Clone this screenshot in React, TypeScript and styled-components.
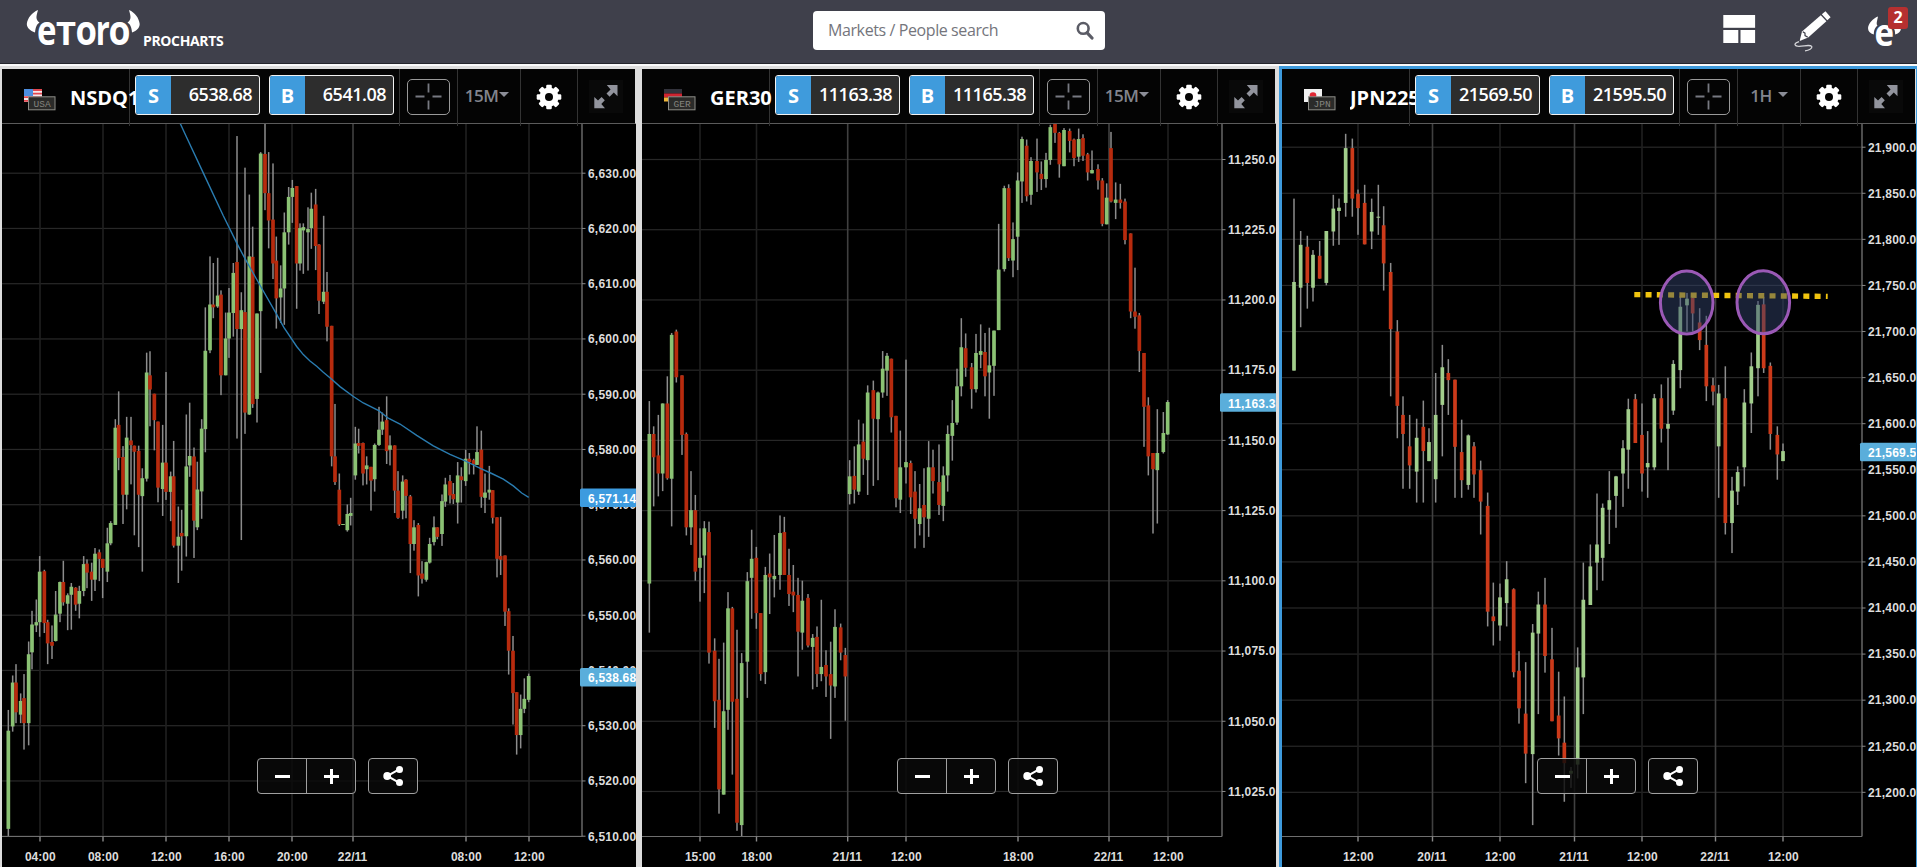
import React from 'react';
import styled, { createGlobalStyle } from 'styled-components';

const GlobalStyle = createGlobalStyle`
  * {
    box-sizing: border-box;
  }

  body {
    margin: 0;
    overflow: hidden;
    background: #dddddd;
    font-family: 'Open Sans', 'Noto Sans', sans-serif;
  }
`;

const Page = styled.div`
  display: flex;
  flex-direction: column;
  width: 1917px;
  height: 867px;
  overflow: hidden;
`;

const Header = styled.header`
  display: grid;
  grid-template-columns: 813px 292px 1fr;
  height: 64px;
  flex: none;
  background: #3f404b;
  border-bottom: 1px solid #24252c;
`;

const Brand = styled.div`
  display: flex;
  align-items: flex-start;
  padding-left: 25px;
`;

const BrandSub = styled.span`
  margin: 31px 0 0 1px;
  color: #fff;
  font-size: 14px;
  font-weight: 700;
  line-height: 20px;
  letter-spacing: -0.36px;
`;

const Search = styled.label`
  display: flex;
  align-items: center;
  justify-content: space-between;
  height: 39px;
  margin-top: 11px;
  padding: 0 11px 0 15px;
  border-radius: 4px;
  background: #fff;
`;

const SearchText = styled.span`
  color: #74757c;
  font-size: 16px;
  line-height: 22px;
  letter-spacing: -0.4px;
  margin-top: -2px;
`;

const HeaderActions = styled.div`
  display: flex;
  justify-content: flex-end;
  align-items: flex-start;
  padding-right: 9px;
`;

const NotifyButton = styled.div`
  position: relative;
  width: 41px;
  height: 56px;
`;

const Badge = styled.span`
  position: absolute;
  top: 7px;
  right: 0;
  width: 20px;
  height: 22px;
  border-radius: 3px;
  background: #b53030;
  color: #fff;
  font-size: 16px;
  font-weight: 700;
  line-height: 21px;
  text-align: center;
`;

const Workspace = styled.main`
  display: flex;
  flex: 1;
  border-top: 2px solid #fafafa;
  padding-left: 2px;
`;

const Panel = styled.section<{ $active?: boolean }>`
  display: flex;
  flex-direction: column;
  flex: none;
  width: ${({ $active }) => ($active ? 638 : 634)}px;
  margin-right: ${({ $active }) => ($active ? 0 : 6)}px;
  border: 0 solid ${({ $active }) => ($active ? '#3d9adc' : '#dddddd')};
  border-width: ${({ $active }) => ($active ? '3px 1px 0 3px' : '3px 0 0 0')};

  &:nth-child(2) {
    margin-right: 3px;
  }
`;

const Toolbar = styled.div`
  position: relative;
  z-index: 1;
  display: flex;
  flex: none;
  height: 55px;
  background: #040404;
  border-right: 1px solid #dddddd;
  border-bottom: 1px solid #5b5b5b;
`;

const Cell = styled.div<{ $width: number }>`
  display: flex;
  align-items: center;
  justify-content: center;
  flex: none;
  width: ${({ $width }) => $width}px;
  height: 57px;
  border-right: 1px solid #333;

  &:last-child {
    border-right: 0;
  }
`;

const TitleCell = styled(Cell)`
  justify-content: flex-start;
  padding-left: 22px;
`;

const Title = styled.span`
  flex: none;
  width: 66px;
  margin: 1px -10px 0 13px;
  overflow: hidden;
  color: #fff;
  font-size: 20px;
  font-weight: 700;
  line-height: 28px;
  white-space: nowrap;
`;

const TradeCell = styled(Cell)`
  position: relative;
  gap: 9px;
  padding: 0 0 5px 0;
`;

const TradeButton = styled.button`
  display: flex;
  width: 125px;
  height: 40px;
  padding: 0;
  overflow: hidden;
  border: 1px solid #f2f2f2;
  border-radius: 3px;
  background: #2d2d2d;
  color: #fff;
  font-family: inherit;
`;

const TradeSide = styled.span`
  width: 35px;
  height: 100%;
  background: #3f9bdc;
  font-size: 20px;
  font-weight: 700;
  line-height: 39px;
  text-align: center;
`;

const TradePrice = styled.span`
  flex: 1;
  padding-right: 7px;
  font-size: 18px;
  font-weight: 600;
  line-height: 37px;
  letter-spacing: -0.5px;
  text-align: right;
`;

const CrossButton = styled.button`
  display: flex;
  align-items: center;
  justify-content: center;
  width: 43px;
  height: 36px;
  margin-bottom: 2px;
  padding: 0;
  border: 1px solid #999;
  border-radius: 5px;
  background: transparent;
`;

const Timeframe = styled.div<{ $gap: number }>`
  display: flex;
  align-items: center;
  gap: ${({ $gap }) => $gap}px;
  margin-bottom: 3px;
  padding-right: ${({ $gap }) => ($gap > 2 ? 0 : 4)}px;
  color: #82848d;
  font-size: 17px;
  font-weight: 600;
  line-height: 24px;
  letter-spacing: -0.5px;
`;

const Caret = styled.i`
  margin-top: -4px;
  border: 5px solid transparent;
  border-top-color: #8b8d97;
  border-bottom: 0;
`;

const ChartArea = styled.div`
  position: relative;
  flex: 1;
  overflow: hidden;
  background: #000;
`;

const ChartSvg = styled.svg`
  display: block;
  font-family: 'Liberation Sans', Arial, sans-serif;
  font-size: 12px;
  font-weight: 700;
`;

const PriceLabel = styled.text`
  fill: #dcdcdc;
  letter-spacing: 0.2px;
`;

const TimeLabel = styled.text`
  fill: #dcdcdc;
  text-anchor: middle;
`;

const Controls = styled.div`
  position: absolute;
  top: 634px;
  left: 255px;
  display: flex;
  gap: 12px;
`;

const ButtonGroup = styled.div`
  display: flex;
  border: 1px solid #a0a0a0;
  border-radius: 4px;
  background: rgba(10, 10, 10, 0.82);
`;

const ControlButton = styled.button`
  display: flex;
  align-items: center;
  justify-content: center;
  width: 48px;
  height: 34px;
  padding: 0;
  border: 0;
  background: transparent;

  & + & {
    width: 49px;
    border-left: 1px solid #a0a0a0;
  }
`;

const LogoLetter = styled.text`
  fill: #fff;
  font-family: 'Open Sans', sans-serif;
  font-weight: 700;
`;

const Logo = () => (
  <svg width="117" height="56" viewBox="25 0 117 56">
    <path d="M38 10 C36 17 35.5 19.5 39.5 22.5 C37 24 35.5 27 35 32.5 C30 30.5 27 28 26.8 24 C27.5 18 32 12.5 38 10Z" fill="#fff" />
    <path d="M129 10 C131 17 131.5 19.5 127.5 22.5 C130 24 131.5 27 132 32.5 C137 30.5 139.5 28 139.7 24 C139 18 135 12.5 129 10Z" fill="#fff" />
    <LogoLetter x="37" y="45.3" fontSize="42" textLength="19.5" lengthAdjust="spacingAndGlyphs">e</LogoLetter>
    <LogoLetter x="56" y="45.3" fontSize="31.5" textLength="20" lengthAdjust="spacingAndGlyphs">T</LogoLetter>
    <LogoLetter x="75.5" y="45.3" fontSize="42" textLength="21.5" lengthAdjust="spacingAndGlyphs">o</LogoLetter>
    <LogoLetter x="95.7" y="45.3" fontSize="42" textLength="14" lengthAdjust="spacingAndGlyphs">r</LogoLetter>
    <LogoLetter x="108.5" y="45.3" fontSize="42" textLength="22" lengthAdjust="spacingAndGlyphs">o</LogoLetter>
  </svg>
);

const SearchIcon = () => (
  <svg width="18" height="19" viewBox="0 0 18 19" fill="none" stroke="#5b5c66">
    <circle cx="7.2" cy="7.4" r="5.4" strokeWidth="2.6" />
    <path d="M11.2 11.8 L16 17" strokeWidth="3.2" strokeLinecap="round" />
  </svg>
);

const LayoutIcon = () => (
  <svg width="71" height="56" viewBox="1723 0 71 56" fill="#fff">
    <rect x="1723.3" y="15" width="31.8" height="12.8" />
    <rect x="1723.3" y="30" width="15" height="13" />
    <rect x="1740.5" y="30" width="14.6" height="13" />
  </svg>
);

const PencilIcon = () => (
  <svg width="73" height="56" viewBox="1794 0 73 56">
    <path d="M1825.5 11.3 L1830.6 17.3 L1827.3 20.2 L1821.8 14.2Z" fill="#fff" />
    <path d="M1820.8 15.2 L1826.4 21.2 L1808.2 37.6 L1799.6 41 L1802 31.6Z" fill="#fff" />
    <path d="M1802.8 31.8 L1805 33.2 L1805 35.6 L1807.8 37.2" fill="none" stroke="#3f404b" strokeWidth="1.2" />
    <path
      d="M1799 41.6 C1794.5 43 1793.5 45 1797.5 46.2 C1802 47 1810 43.8 1811.8 46.5 C1812.5 48.5 1809 50.5 1805 50.8"
      fill="none"
      stroke="#d5d5d9"
      strokeWidth="1.3"
    />
  </svg>
);

const EtoroIcon = () => (
  <svg width="41" height="56" viewBox="1867 0 41 56">
    <path d="M1878 16.5 C1877 21.5 1876 24 1877.5 25.5 C1874.5 28 1874 30.5 1873.8 34.5 C1870 33.5 1868 31 1868 28 C1868.5 23 1873 18.5 1878 16.5Z" fill="#fff" />
    <path d="M1891 16.5 C1892 21.5 1893 24 1891.5 25.5 C1894.5 28 1895 30.5 1895.2 34.5 C1899 33.5 1901 31 1901 28 C1900.5 23 1896 18.5 1891 16.5Z" fill="#fff" />
    <LogoLetter x="1874.5" y="46" fontSize="38" textLength="19.5" lengthAdjust="spacingAndGlyphs">e</LogoLetter>
  </svg>
);

const CrossIcon = () => (
  <svg width="27" height="27" viewBox="0 0 27 27" stroke="#777981" strokeWidth="1.8">
    <path d="M0.5 13.5H9.5M17.5 13.5H26.5M13.5 0.5V9.5M13.5 17.5V26.5" />
  </svg>
);

const GearIcon = () => (
  <svg width="26" height="28" viewBox="-13 -13 26 28">
    {[0, 45, 90, 135].map((angle) => (
      <rect key={angle} x="-2.8" y="-12.3" width="5.6" height="24.6" rx="1.2" fill="#fff" transform={`rotate(${angle})`} />
    ))}
    <circle r="9.6" fill="#fff" />
    <circle r="4" fill="#040404" />
  </svg>
);

const ExpandIcon = () => (
  <svg width="34" height="36" viewBox="0 0 34 36" fill="#92949d">
    <rect width="34" height="33" fill="#090909" />
    <path d="M28.5 5 V16.2 L24.8 12.6 L20.6 16.8 L17.5 13.6 L21.6 9.4 L17.8 5Z" />
    <path d="M5.3 28.3 V17 L9 20.6 L12.6 17 L15.8 20.2 L12.3 24 L16 28.3Z" />
  </svg>
);

const MinusIcon = () => (
  <svg width="15" height="15" viewBox="0 0 15 15" stroke="#fff" strokeWidth="3">
    <path d="M0 7.5H15" />
  </svg>
);

const PlusIcon = () => (
  <svg width="15" height="15" viewBox="0 0 15 15" stroke="#fff" strokeWidth="3">
    <path d="M0 7.5H15M7.5 0V15" />
  </svg>
);

const ShareIcon = () => (
  <svg width="21" height="20" viewBox="0 0 21 20" fill="#fff">
    <path d="M16.5 3.2 L4.2 10 L16.5 16.8" fill="none" stroke="#fff" strokeWidth="2" />
    <circle cx="4.2" cy="10" r="3.9" />
    <circle cx="16.5" cy="3.5" r="3.5" />
    <circle cx="16.5" cy="16.5" r="3.5" />
  </svg>
);

type Country = 'USA' | 'GER' | 'JPN';

const FlagSvg = styled.svg`
  flex: none;
  margin-top: 4px;
`;

const Flag = ({ country }: { country: Country }) => (
  <FlagSvg width="33" height="22" viewBox="0 0 33 22">
    {country === 'USA' && (
      <>
        <rect width="18" height="13" fill="#f3e8ec" />
        <path d="M0 1H18M0 4.6H18M0 8.2H18M0 11.8H18" stroke="#e2474f" strokeWidth="1.8" />
        <rect width="9" height="7" fill="#4d8ee0" />
      </>
    )}
    {country === 'GER' && (
      <>
        <rect width="18" height="4.5" fill="#33333c" />
        <rect y="4.5" width="18" height="4" fill="#cf2430" />
        <rect y="8.5" width="18" height="4" fill="#eeb63a" />
      </>
    )}
    {country === 'JPN' && (
      <>
        <rect width="18" height="13" fill="#f1f1f1" />
        <circle cx="9" cy="6.5" r="3.3" fill="#e02733" />
      </>
    )}
    <rect x="4.5" y="7.8" width="26.5" height="13" fill="#2b2b29" stroke="#8d8d88" />
    <text x="9.5" y="17.8" fill="#85857f" fontSize="9.5" fontFamily="'Liberation Mono', monospace">
      {country}
    </text>
  </FlagSvg>
);

// [x, high, bodyTop, bodyBottom, low, rising]
type Candle = [number, number, number, number, number, 0 | 1];

interface Segment {
  x: number;
  unit: number;
  candles: Candle[];
}

interface ChartData {
  country: Country;
  title: string;
  sell: string;
  buy: string;
  timeframe: string;
  caretGap: number;
  active?: boolean;
  firstPrice: number;
  priceStep: number;
  firstY: number;
  stepY: number;
  priceRows: number;
  times: [number, string, boolean][];
  colors: [string, string];
  segments: Segment[];
  tags: { y: number; label: string; color: string }[];
  average?: [number, number][];
}

const nsdq: ChartData = {
  country: 'USA',
  title: 'NSDQ100',
  sell: '6538.68',
  buy: '6541.08',
  timeframe: '15M',
  caretGap: 1,
  firstPrice: 6630,
  priceStep: 10,
  firstY: 49.2,
  stepY: 55.25,
  priceRows: 13,
  times: [
    [38, '04:00', false], [101, '08:00', false], [164, '12:00', false], [227, '16:00', false],
    [290, '20:00', false], [351, '22/11', true], [464, '08:00', false], [527, '12:00', false],
  ],
  colors: ['#8bc274', '#b72b0e'],
  segments: [
    {
      x: -2,
      unit: 2.1189,
      candles: [
        [25, 1250, 1294, 1502, 1517, 1], [38, 1177, 1192, 1285, 1296, 1], [48, 1153, 1192, 1255, 1278, 0],
        [62, 1215, 1231, 1260, 1278, 1], [72, 1174, 1225, 1278, 1334, 0], [86, 1105, 1132, 1278, 1325, 1],
        [96, 1040, 1069, 1128, 1164, 1], [109, 1016, 1064, 1071, 1085, 1], [119, 924, 957, 1064, 1095, 1],
        [133, 953, 956, 1066, 1087, 0], [143, 1059, 1064, 1109, 1153, 0], [156, 1071, 1106, 1114, 1142, 0],
        [167, 998, 1048, 1104, 1105, 1], [180, 978, 979, 1046, 1064, 1], [190, 934, 979, 1022, 1029, 0],
        [203, 1003, 1007, 1025, 1081, 1], [214, 981, 989, 1006, 1080, 1], [227, 990, 991, 1027, 1040, 0],
        [238, 987, 998, 1025, 1056, 1], [251, 924, 941, 998, 1009, 1], [261, 931, 940, 959, 992, 0],
        [275, 938, 957, 974, 1019, 0], [285, 907, 919, 974, 998, 1], [298, 910, 916, 930, 977, 0],
        [308, 930, 930, 949, 1013, 0], [322, 864, 897, 957, 979, 1], [332, 850, 854, 897, 901, 1],
        [346, 634, 652, 858, 858, 1], [356, 575, 646, 716, 742, 0], [369, 691, 714, 794, 856, 0],
        [380, 629, 673, 794, 825, 1], [393, 629, 679, 689, 772, 0], [403, 690, 690, 703, 880, 0],
        [416, 690, 701, 794, 905, 0], [427, 738, 759, 797, 957, 1], [440, 493, 535, 760, 766, 1],
        [450, 490, 541, 571, 649, 0], [463, 580, 580, 636, 700, 0], [474, 639, 639, 779, 810, 0],
        [488, 646, 726, 782, 839, 1], [498, 534, 726, 788, 805, 0], [512, 745, 755, 788, 850, 1],
        [521, 680, 755, 902, 906, 0], [535, 819, 883, 902, 981, 1], [545, 826, 875, 882, 955, 0],
        [559, 624, 734, 882, 925, 1], [569, 599, 712, 732, 756, 1], [582, 694, 713, 849, 928, 0],
        [592, 724, 783, 863, 869, 1], [605, 634, 654, 787, 845, 1], [616, 397, 489, 655, 704, 1],
        [630, 289, 391, 488, 494, 1], [640, 303, 391, 397, 420, 0], [653, 292, 372, 395, 398, 1],
        [663, 361, 370, 541, 583, 0], [677, 408, 463, 541, 541, 1], [687, 356, 408, 463, 504, 1],
        [700, 303, 324, 409, 459, 1], [711, 34, 301, 443, 675, 0], [724, 365, 403, 443, 890, 1],
        [735, 101, 407, 620, 665, 0], [748, 158, 289, 624, 625, 1], [758, 226, 290, 602, 610, 0],
        [771, 410, 410, 591, 641, 1], [782, 68, 71, 405, 536, 1], [795, 0, 72, 155, 191, 0],
        [806, 68, 155, 213, 272, 0], [819, 92, 211, 304, 337, 0], [829, 247, 298, 378, 442, 0],
        [842, 308, 357, 376, 430, 1], [853, 196, 238, 357, 434, 1], [866, 142, 163, 238, 264, 1],
        [877, 127, 144, 163, 218, 1], [890, 140, 140, 304, 400, 0], [900, 219, 229, 304, 319, 1],
        [910, 219, 227, 234, 326, 1], [924, 185, 231, 238, 319, 1], [934, 154, 188, 229, 273, 1],
        [947, 146, 179, 267, 318, 0], [957, 263, 264, 383, 411, 0], [971, 203, 364, 385, 390, 1],
        [981, 322, 364, 438, 469, 0],
      ],
    },
    {
      x: 308,
      unit: 2.099,
      candles: [
        [65, 432, 432, 706, 727, 0], [75, 596, 706, 760, 766, 0], [88, 742, 776, 849, 852, 0],
        [99, 848, 848, 850, 850, 1], [112, 807, 827, 861, 864, 1], [122, 793, 825, 831, 851, 1],
        [136, 644, 679, 746, 755, 1], [146, 648, 678, 684, 700, 0], [159, 677, 678, 742, 767, 0],
        [170, 706, 725, 733, 765, 1], [183, 728, 728, 757, 820, 0], [194, 679, 682, 754, 780, 1],
        [207, 602, 650, 682, 684, 1], [217, 614, 633, 650, 661, 1], [230, 580, 630, 695, 722, 0],
        [240, 662, 683, 692, 725, 1], [254, 683, 683, 778, 825, 0], [264, 737, 778, 835, 837, 0],
        [278, 746, 759, 820, 838, 1], [288, 754, 755, 789, 836, 0], [301, 787, 790, 890, 951, 0],
        [312, 840, 855, 890, 904, 1], [325, 846, 850, 956, 1000, 0], [336, 926, 952, 963, 973, 0],
        [349, 927, 928, 965, 969, 1], [359, 877, 890, 929, 931, 1], [372, 832, 855, 886, 893, 1],
        [382, 855, 855, 875, 880, 0], [396, 786, 800, 869, 894, 1], [406, 751, 765, 801, 812, 1],
        [420, 745, 758, 788, 805, 0], [430, 762, 785, 796, 806, 0], [443, 718, 746, 803, 847, 1],
        [454, 729, 748, 756, 803, 0], [467, 692, 711, 758, 768, 1], [478, 699, 711, 718, 744, 0],
        [491, 711, 714, 722, 744, 0], [501, 643, 697, 724, 724, 1], [514, 652, 692, 791, 814, 0],
        [525, 742, 782, 793, 825, 1], [538, 726, 776, 782, 797, 1], [548, 777, 777, 835, 847, 0],
        [561, 834, 834, 921, 960, 0], [572, 833, 915, 923, 955, 0], [585, 914, 914, 1032, 1062, 0],
        [596, 1025, 1031, 1114, 1164, 0], [609, 1083, 1114, 1203, 1269, 0], [620, 1201, 1201, 1291, 1332, 0],
        [632, 1206, 1236, 1291, 1319, 1], [643, 1172, 1215, 1236, 1245, 1], [656, 1162, 1167, 1217, 1222, 1],
      ],
    },
  ],
  tags: [
    { y: 373.8, label: '6,571.14', color: '#3d9bdf' },
    { y: 553.3, label: '6,538.68', color: '#5aaedb' },
  ],
  average: [
    [178, -1], [184.7, 13.5], [203, 52.6], [221.3, 91.8], [235.3, 120.1], [243.3, 135.2], [259.3, 163.5],
    [274.7, 190.4], [282, 203.7], [294.7, 222.5], [301.3, 230.6], [308, 237], [314.7, 242.3],
    [321.3, 248.2], [329.7, 255.2], [338, 262.6], [351, 272.3], [361.3, 279], [376.7, 286.6],
    [386.3, 294.2], [398, 300], [414.7, 311.4], [431.3, 321.9], [448, 330.4], [463.7, 337.1],
    [478.3, 344.3], [489.7, 349.5], [501.3, 355.2], [511.3, 361.9], [519.7, 369], [526.7, 373.3],
  ],
};

const ger: ChartData = {
  country: 'GER',
  title: 'GER30',
  sell: '11163.38',
  buy: '11165.38',
  timeframe: '15M',
  caretGap: 1,
  firstPrice: 11250,
  priceStep: 25,
  firstY: 35.5,
  stepY: 70.22,
  priceRows: 10,
  times: [
    [58, '15:00', false], [114.5, '18:00', false], [205.7, '21/11', true], [264, '12:00', false],
    [376, '18:00', false], [467, '22/11', true], [526, '12:00', false],
  ],
  colors: ['#8bc274', '#b72b0e'],
  segments: [
    {
      x: -2,
      unit: 2.099,
      candles: [
        [28, 590, 659, 973, 1076, 1], [41, 643, 659, 708, 811, 0], [55, 619, 704, 742, 790, 0],
        [68, 595, 595, 742, 779, 1], [82, 538, 595, 752, 755, 0], [95, 447, 451, 753, 853, 1],
        [109, 440, 444, 540, 551, 0], [126, 536, 536, 661, 703, 0], [139, 656, 659, 855, 872, 0],
        [153, 737, 819, 855, 892, 1], [166, 787, 819, 948, 967, 0], [180, 857, 919, 940, 1011, 1],
        [193, 842, 857, 914, 993, 1], [207, 843, 865, 1118, 1141, 0], [224, 1088, 1114, 1220, 1276, 0],
        [237, 1131, 1217, 1405, 1456, 0], [251, 1097, 1241, 1416, 1416, 1], [264, 991, 1025, 1238, 1280, 1],
        [277, 1022, 1025, 1221, 1374, 0], [291, 1070, 1215, 1475, 1492, 0], [305, 1119, 1140, 1480, 1503, 1],
        [322, 949, 968, 1137, 1213, 1], [335, 860, 921, 961, 1047, 1], [349, 896, 919, 1035, 1068, 0],
        [362, 1035, 1035, 1163, 1177, 0], [376, 938, 955, 1159, 1184, 1], [389, 910, 952, 960, 1037, 0],
        [403, 871, 957, 964, 1002, 1], [420, 830, 867, 955, 986, 1], [433, 833, 865, 955, 955, 0],
        [447, 900, 955, 995, 1020, 0], [460, 934, 990, 998, 1033, 0], [474, 961, 997, 1074, 1168, 0],
        [487, 967, 1009, 1076, 1112, 1], [504, 995, 1003, 1103, 1107, 0], [518, 1079, 1087, 1106, 1195, 1],
        [531, 1063, 1085, 1163, 1190, 0], [544, 1007, 1148, 1163, 1178, 1], [558, 1113, 1144, 1168, 1211, 0],
        [572, 1095, 1163, 1187, 1299, 0], [585, 1027, 1064, 1189, 1213, 1], [602, 1057, 1065, 1118, 1134, 0],
        [616, 1108, 1123, 1168, 1261, 0], [629, 714, 748, 785, 807, 1], [643, 685, 747, 776, 805, 0],
        [656, 629, 681, 780, 787, 1], [670, 637, 675, 711, 745, 0], [683, 557, 572, 714, 787, 1],
        [700, 547, 567, 627, 768, 0], [714, 570, 572, 628, 756, 1], [728, 485, 522, 572, 583, 1],
        [741, 489, 495, 526, 579, 1], [754, 501, 501, 624, 656, 0], [768, 621, 621, 794, 813, 0],
        [781, 652, 729, 797, 825, 1], [798, 503, 718, 729, 763, 1], [812, 715, 720, 792, 827, 0],
        [825, 737, 780, 837, 899, 0], [839, 764, 815, 848, 872, 1], [852, 731, 808, 834, 898, 0],
        [866, 674, 729, 837, 875, 1], [879, 692, 729, 758, 784, 0], [897, 681, 760, 808, 829, 0],
        [910, 727, 746, 810, 842, 1], [923, 641, 659, 746, 780, 1], [937, 588, 636, 663, 715, 1],
        [951, 522, 559, 635, 640, 1],
      ],
    },
    {
      x: 318,
      unit: 2.099,
      candles: [
        [4, 416, 477, 559, 580, 1], [17, 448, 479, 520, 539, 0], [35, 510, 519, 565, 606, 0],
        [48, 449, 489, 565, 572, 1], [62, 429, 485, 493, 521, 1], [75, 447, 487, 538, 580, 0],
        [88, 436, 515, 530, 627, 1], [102, 442, 442, 516, 579, 1], [116, 218, 314, 441, 441, 1],
        [133, 138, 143, 313, 318, 1], [146, 135, 143, 290, 296, 0], [159, 215, 250, 295, 330, 1],
        [173, 110, 127, 245, 315, 1], [186, 35, 40, 129, 174, 1], [200, 41, 54, 160, 171, 0],
        [213, 78, 86, 157, 178, 1], [231, 39, 86, 110, 151, 0], [244, 87, 113, 124, 147, 0],
        [258, 69, 84, 124, 142, 1], [271, 10, 15, 84, 94, 1], [285, 7, 7, 27, 48, 0],
        [298, 25, 27, 93, 121, 0], [312, 17, 21, 97, 97, 1], [329, 18, 23, 44, 68, 0],
        [342, 39, 41, 80, 97, 0], [356, 18, 40, 77, 88, 1], [369, 30, 38, 75, 86, 0],
        [383, 69, 72, 110, 127, 0], [396, 64, 105, 112, 112, 1], [414, 93, 103, 127, 146, 0],
        [427, 122, 127, 218, 223, 0], [440, 133, 163, 219, 219, 1], [453, 25, 59, 171, 173, 0],
        [467, 131, 167, 174, 208, 1], [481, 134, 167, 174, 186, 0], [495, 165, 171, 252, 261, 0],
        [512, 238, 238, 402, 416, 0], [525, 310, 402, 413, 438, 0], [538, 405, 410, 485, 529, 0],
        [552, 489, 489, 602, 686, 0], [565, 582, 599, 706, 746, 0], [579, 699, 699, 733, 868, 0],
        [592, 607, 699, 735, 847, 1], [610, 613, 657, 697, 700, 1], [623, 588, 592, 660, 661, 1],
      ],
    },
  ],
  tags: [{ y: 278.5, label: '11,163.38', color: '#5aaedb' }],
};

const jpn: ChartData = {
  country: 'JPN',
  title: 'JPN225',
  sell: '21569.50',
  buy: '21595.50',
  timeframe: '1H',
  caretGap: 6,
  active: true,
  firstPrice: 21900,
  priceStep: 50,
  firstY: 23.2,
  stepY: 46.08,
  priceRows: 15,
  times: [
    [76, '12:00', false], [150.5, '20/11', true], [218, '12:00', false], [292.5, '21/11', true],
    [360, '12:00', false], [433.5, '22/11', true], [501, '12:00', false],
  ],
  colors: ['#a2ce8c', '#cb3a1a'],
  segments: [
    {
      x: -5,
      unit: 2.099,
      candles: [
        [51, 165, 340, 526, 526, 1], [71, 233, 262, 352, 435, 1], [91, 243, 266, 342, 396, 0],
        [108, 273, 283, 352, 381, 1], [128, 254, 285, 333, 333, 0], [148, 233, 233, 342, 347, 1],
        [169, 157, 186, 234, 264, 1], [186, 165, 184, 191, 262, 1], [206, 29, 59, 174, 203, 1],
        [226, 39, 59, 165, 203, 0], [243, 146, 155, 185, 241, 0], [263, 136, 174, 261, 261, 0],
        [284, 165, 193, 234, 271, 1], [304, 136, 203, 205, 241, 1], [320, 181, 221, 301, 358, 0],
        [341, 300, 319, 439, 580, 0], [361, 420, 444, 600, 668, 0], [378, 580, 619, 659, 774, 0],
        [398, 619, 685, 725, 774, 0], [419, 627, 667, 738, 803, 1], [439, 589, 644, 695, 803, 0],
        [456, 647, 676, 716, 716, 1], [476, 531, 619, 754, 803, 1], [496, 472, 519, 598, 706, 1],
        [514, 502, 531, 546, 619, 0], [534, 545, 545, 686, 793, 0], [554, 629, 697, 756, 793, 0],
        [574, 660, 662, 766, 776, 1], [591, 676, 685, 744, 793, 0], [611, 715, 735, 801, 870, 0],
        [632, 782, 810, 1032, 1063, 0], [649, 971, 1042, 1052, 1103, 0], [669, 973, 1002, 1061, 1093, 1],
        [689, 926, 964, 1014, 1063, 1], [710, 983, 985, 1159, 1170, 0], [726, 1115, 1156, 1235, 1267, 0],
        [746, 1138, 1246, 1330, 1392, 0], [767, 1058, 1076, 1331, 1480, 1], [784, 990, 1017, 1078, 1247, 1],
        [804, 961, 1017, 1125, 1160, 0], [825, 1066, 1132, 1262, 1262, 0], [845, 1158, 1250, 1298, 1334, 0],
        [862, 1210, 1307, 1350, 1431, 0], [882, 1358, 1366, 1372, 1402, 1], [902, 1107, 1149, 1353, 1382, 1],
        [919, 929, 1007, 1170, 1247, 1], [940, 891, 937, 1018, 1018, 1],
      ],
    },
    {
      x: 315,
      unit: 2.099,
      candles: [
        [0, 784, 891, 929, 987, 1], [17, 805, 814, 919, 967, 1], [37, 737, 798, 818, 890, 1],
        [57, 747, 748, 789, 856, 1], [78, 672, 689, 742, 812, 1], [94, 585, 607, 692, 774, 1],
        [115, 575, 586, 678, 678, 0], [135, 595, 661, 742, 780, 0], [152, 653, 720, 729, 793, 1],
        [172, 575, 584, 729, 735, 1], [193, 555, 584, 648, 677, 0], [213, 541, 638, 648, 735, 1],
        [229, 504, 512, 610, 619, 1], [250, 370, 392, 525, 563, 1], [270, 363, 375, 389, 444, 1],
        [287, 370, 373, 406, 444, 0], [308, 395, 425, 462, 483, 0], [328, 411, 472, 559, 590, 0],
        [348, 541, 557, 570, 599, 0], [365, 556, 574, 685, 793, 1], [385, 517, 584, 846, 870, 0],
        [405, 749, 778, 846, 909, 1], [422, 727, 739, 780, 808, 1], [442, 565, 593, 729, 769, 1],
        [463, 488, 517, 595, 657, 1], [483, 380, 388, 521, 580, 1], [500, 371, 387, 521, 531, 0],
        [520, 509, 516, 659, 692, 0], [541, 643, 661, 702, 755, 0], [558, 679, 695, 716, 716, 1],
      ],
    },
  ],
  tags: [{ y: 328, label: '21,569.50', color: '#5aaedb' }],
};

const AXIS_X = 580;
const AXIS_Y = 712.5;

const formatPrice = (value: number) =>
  value.toLocaleString('en-US', { minimumFractionDigits: 2, maximumFractionDigits: 2 });

const Candles = ({ segment, colors }: { segment: Segment; colors: [string, string] }) => (
  <g>
    {segment.candles.map(([cx, high, top, bottom, low, rising]) => {
      const x = segment.x + cx / 3;
      const y = (v: number) => v / segment.unit - 4;
      return (
        <g key={cx}>
          <rect x={x - 0.75} y={y(high)} width={1.5} height={y(low) - y(high)} fill="#8c8c8c" />
          <rect
            x={x - 1.85}
            y={y(top)}
            width={3.7}
            height={Math.max(y(bottom) - y(top), 1)}
            fill={rising ? colors[0] : colors[1]}
          />
        </g>
      );
    })}
  </g>
);

const Chart = ({ data }: { data: ChartData }) => {
  const rows = Array.from({ length: data.priceRows }, (_, i) => ({
    y: data.firstY + data.stepY * i,
    label: formatPrice(data.firstPrice - data.priceStep * i),
  }));

  return (
    <ChartSvg width="634" height="743" viewBox="0 0 634 743">
      {rows.map((row) => (
        <rect key={row.label} x="0" y={row.y - 0.6} width={AXIS_X} height="1.2" fill="#282828" />
      ))}
      {data.times.map(([x, , day]) => (
        <rect key={x} x={x - 0.8} y="0" width="1.6" height={AXIS_Y} fill={day ? '#404040' : '#202020'} />
      ))}

      {data.segments.map((segment) => (
        <Candles key={segment.x} segment={segment} colors={data.colors} />
      ))}

      {data.average && (
        <polyline
          points={data.average.map((p) => p.join(',')).join(' ')}
          fill="none"
          stroke="#2a7cb0"
          strokeWidth="1.4"
        />
      )}

      {data.country === 'JPN' && (
        <g>
          <path d="M352.3 170.6 L545.7 172.4" stroke="#f1c40f" strokeWidth="5.4" strokeDasharray="6 5.27" />
          <g fill="#34466e" fillOpacity="0.48" stroke="#9b59b6" strokeWidth="3">
            <ellipse cx="404.7" cy="178.5" rx="26.3" ry="31.5" />
            <ellipse cx="481.3" cy="178.2" rx="26.3" ry="31.5" />
          </g>
        </g>
      )}

      <path d={`M${AXIS_X} 0V${AXIS_Y}`} stroke="#6e6e6e" strokeWidth="1.4" />
      <path d={`M0 ${AXIS_Y}H${AXIS_X}`} stroke="#6e6e6e" />
      {rows.map((row) => (
        <g key={row.label}>
          <rect x={AXIS_X} y={row.y - 0.5} width="3.5" height="1" fill="#8a8a8a" />
          <PriceLabel x="586" y={row.y + 4.3}>{row.label}</PriceLabel>
        </g>
      ))}
      {data.times.map(([x, label, day]) => (
        <g key={x}>
          <rect x={x - 0.7} y={AXIS_Y} width="1.4" height="5" fill="#8a8a8a" />
          <TimeLabel x={day ? x - 0.5 : x + 0.3} y="737">{label}</TimeLabel>
        </g>
      ))}
      {data.tags.map((tag) => (
        <g key={tag.label}>
          <rect x="578" y={tag.y - 9.3} width="60" height="18.6" rx="1.5" fill={tag.color} />
          <text x="586" y={tag.y + 5} fill="#fff" letterSpacing="0.2">{tag.label}</text>
        </g>
      ))}
    </ChartSvg>
  );
};

const ChartPanel = ({ data }: { data: ChartData }) => (
  <Panel $active={data.active}>
    <Toolbar>
      <TitleCell $width={128}>
        <Flag country={data.country} />
        <Title>{data.title}</Title>
      </TitleCell>
      <TradeCell $width={270}>
        <TradeButton>
          <TradeSide>S</TradeSide>
          <TradePrice>{data.sell}</TradePrice>
        </TradeButton>
        <TradeButton>
          <TradeSide>B</TradeSide>
          <TradePrice>{data.buy}</TradePrice>
        </TradeButton>
      </TradeCell>
      <Cell $width={58}>
        <CrossButton>
          <CrossIcon />
        </CrossButton>
      </Cell>
      <Cell $width={63}>
        <Timeframe $gap={data.caretGap}>
          {data.timeframe}
          <Caret />
        </Timeframe>
      </Cell>
      <Cell $width={57}>
        <GearIcon />
      </Cell>
      <Cell $width={56}>
        <ExpandIcon />
      </Cell>
    </Toolbar>
    <ChartArea>
      <Chart data={data} />
      <Controls>
        <ButtonGroup>
          <ControlButton>
            <MinusIcon />
          </ControlButton>
          <ControlButton>
            <PlusIcon />
          </ControlButton>
        </ButtonGroup>
        <ButtonGroup>
          <ControlButton>
            <ShareIcon />
          </ControlButton>
        </ButtonGroup>
      </Controls>
    </ChartArea>
  </Panel>
);

const App: React.FC = () => {
  return (
    <Page>
      <GlobalStyle />
      <Header>
        <Brand>
          <Logo />
          <BrandSub>PROCHARTS</BrandSub>
        </Brand>
        <Search>
          <SearchText>Markets / People search</SearchText>
          <SearchIcon />
        </Search>
        <HeaderActions>
          <LayoutIcon />
          <PencilIcon />
          <NotifyButton>
            <EtoroIcon />
            <Badge>2</Badge>
          </NotifyButton>
        </HeaderActions>
      </Header>
      <Workspace>
        <ChartPanel data={nsdq} />
        <ChartPanel data={ger} />
        <ChartPanel data={jpn} />
      </Workspace>
    </Page>
  );
};

export default App;
